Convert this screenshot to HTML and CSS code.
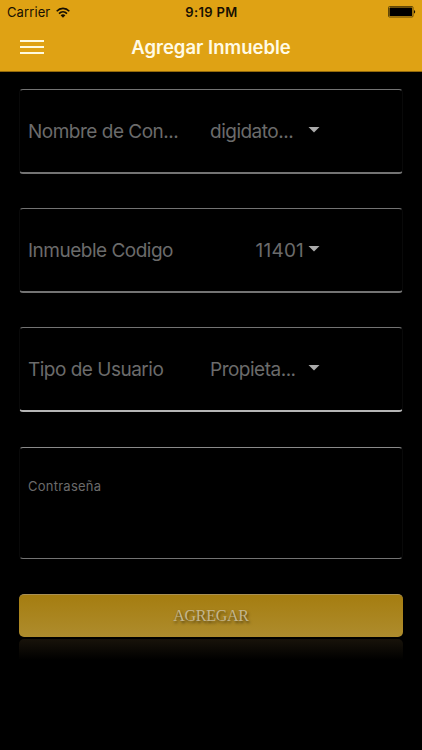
FILE: index.html
```html
<!DOCTYPE html>
<html lang="es">
  <head>
    <meta charset="UTF-8" />
    <meta name="viewport" content="width=device-width, initial-scale=1.0" />
    <title>Agregar Inmueble</title>
    <link rel="stylesheet" href="styles.css" />
  </head>
  <body>
    <header class="header">
      <div class="status-bar">
        <div class="carrier">
          <span>Carrier</span>
          <svg class="wifi" width="14" height="11" viewBox="0 0 14 11">
            <g fill="none" stroke="#171002" stroke-width="1.6">
              <path d="M0.7 4.2C4.2 0.4 9.8 0.4 13.3 4.2" />
              <path d="M3 6.6C5.3 4.3 8.7 4.3 11 6.6" />
            </g>
            <path d="M4.6 8.2C6 7 8 7 9.4 8.2L7 10.7Z" fill="#171002" />
          </svg>
        </div>
        <span class="time">9:19 PM</span>
        <svg class="battery" width="28" height="12" viewBox="0 0 28 12">
          <rect x="0.5" y="0.5" width="24.5" height="10.5" rx="1" fill="none" stroke="#624807" />
          <rect x="1.5" y="1.5" width="22.5" height="8.5" rx="0.5" fill="#000" />
          <path d="M26 4C27.6 4.4 27.6 7.2 26 7.6Z" fill="#171002" />
        </svg>
      </div>
      <div class="nav-bar">
        <button class="menu" aria-label="Menu">
          <span></span>
          <span></span>
          <span></span>
        </button>
        <h1>Agregar Inmueble</h1>
      </div>
    </header>

    <main class="form">
      <div class="field">
        <span class="label">Nombre de Con...</span>
        <span class="value">digidato...</span>
        <span class="arrow"></span>
      </div>
      <div class="field">
        <span class="label">Inmueble Codigo</span>
        <span class="value number">11401</span>
        <span class="arrow"></span>
      </div>
      <div class="field bright">
        <span class="label">Tipo de Usuario</span>
        <span class="value">Propieta...</span>
        <span class="arrow"></span>
      </div>
      <div class="field password">
        <span class="label">Contraseña</span>
      </div>
      <button class="submit">AGREGAR</button>
      <div class="reflection"></div>
    </main>
  </body>
</html>
```

FILE: styles.css
```css
* {
  box-sizing: border-box;
}
body {
  margin: 0;
  min-height: 750px;
  background-color: #000;
  font-family: Inter, 'Liberation Sans', sans-serif;
}
button {
  border: none;
  padding: 0;
  cursor: pointer;
}
.header {
  height: 72px;
  background-color: #dfa214;
  border-bottom: 1px solid #93690b;
}
.status-bar {
  display: grid;
  grid-template-columns: 1fr auto 1fr;
  align-items: center;
  height: 24px;
  padding: 0 6px 0 7px;
  color: #171002;
  font-size: 13px;
  line-height: 24px;
}
.carrier {
  display: flex;
  align-items: center;
  gap: 6px;
  letter-spacing: 0.1px;
}
.time {
  font-weight: 600;
  letter-spacing: 0.35px;
}
.battery {
  justify-self: end;
}
.nav-bar {
  display: grid;
  grid-template-columns: 24px 1fr 24px;
  align-items: center;
  height: 46px;
  padding: 0 20px;
}
.menu {
  display: flex;
  flex-direction: column;
  gap: 4px;
  background: none;
}
.menu span {
  width: 24px;
  height: 2px;
  background-color: #fffbe0;
}
h1 {
  margin: 0;
  padding-top: 1px;
  color: #fffbe6;
  font-size: 18.5px;
  font-weight: 600;
  line-height: 45px;
  text-align: center;
}
.form {
  padding: 17px 19px 0;
}
.field {
  display: grid;
  grid-template-columns: 182px 94px auto;
  align-items: center;
  height: 85px;
  margin-bottom: 34px;
  padding: 2px 8px 0;
  border-top: 1px solid #737373;
  border-right: 1px solid #090909;
  border-bottom: 2px solid #737373;
  border-left: 1px solid #090909;
  border-radius: 4px;
  color: #6b6b6b;
  font-size: 19px;
  letter-spacing: -0.5px;
  line-height: 24px;
  white-space: nowrap;
}
.bright {
  margin-bottom: 35px;
  border-bottom-color: #b5b5b5;
}
.number {
  justify-self: end;
  letter-spacing: 0.2px;
}
.arrow {
  width: 12px;
  height: 6px;
  margin: -5px 0 0 4px;
  background-color: #aaa;
  clip-path: polygon(0 0, 100% 0, 50% 100%);
}
.password {
  display: block;
  height: 112px;
  margin-bottom: 35px;
  padding-top: 26px;
  border-top-color: #8a8a8a;
  border-bottom-width: 1px;
  font-size: 13px;
  letter-spacing: 0.25px;
}
.submit {
  display: block;
  width: 384px;
  height: 43px;
  border-top: 1px solid #a99155;
  border-radius: 5px;
  background: linear-gradient(#a57d10, #ae8c2d);
  color: #c4b68e;
  font-family: 'Liberation Serif', serif;
  font-size: 16px;
  letter-spacing: -0.25px;
  text-shadow: 1px 2px 3px rgba(0, 0, 0, 0.55);
}
.reflection {
  width: 384px;
  height: 21px;
  margin-top: 2px;
  border-radius: 5px 5px 0 0;
  background: linear-gradient(#18130a, #000);
}
```
